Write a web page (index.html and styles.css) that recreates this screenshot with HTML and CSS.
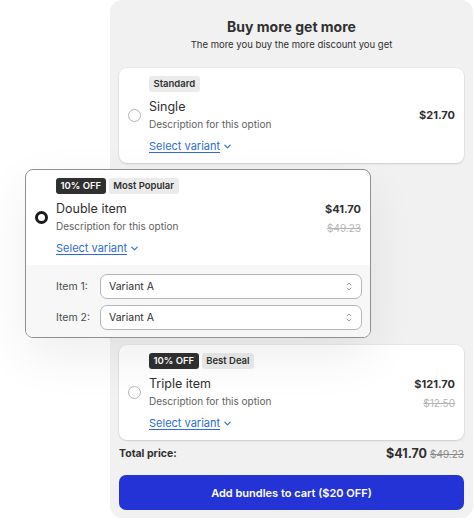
FILE: index.html
```html
<!DOCTYPE html>
<html>
<head>
<meta charset="utf-8">
<link rel="stylesheet" href="styles.css">
</head>
<body>
<div class="panel">
  <div class="header">
    <h1 class="title">Buy more get more</h1>
    <p class="subtitle">The more you buy the more discount you get</p>
  </div>

  <div class="card">
    <div class="card-main">
      <span class="radio"></span>
      <div class="body">
        <div class="badges"><span class="badge light">Standard</span></div>
        <div class="row">
          <div class="info">
            <div class="name">Single</div>
            <div class="desc">Description for this option</div>
          </div>
          <div class="prices"><div class="price">$21.70</div></div>
        </div>
        <div class="link-row"><a class="link" href="#">Select variant</a><svg class="chev" viewBox="0 0 10 10" width="9" height="9"><path d="M2 3.5 L5 6.5 L8 3.5" fill="none" stroke="#2f6bd6" stroke-width="1.3" stroke-linecap="round" stroke-linejoin="round"/></svg></div>
      </div>
    </div>
  </div>

  <div class="card selected">
    <div class="card-main">
      <span class="radio on"></span>
      <div class="body">
        <div class="badges"><span class="badge dark">10% OFF</span><span class="badge light">Most Popular</span></div>
        <div class="row">
          <div class="info">
            <div class="name">Double item</div>
            <div class="desc">Description for this option</div>
          </div>
          <div class="prices"><div class="price">$41.70</div><div class="old">$49.23</div></div>
        </div>
        <div class="link-row"><a class="link" href="#">Select variant</a><svg class="chev" viewBox="0 0 10 10" width="9" height="9"><path d="M2 3.5 L5 6.5 L8 3.5" fill="none" stroke="#2f6bd6" stroke-width="1.3" stroke-linecap="round" stroke-linejoin="round"/></svg></div>
      </div>
    </div>
    <div class="variants">
      <div class="vrow">
        <span class="vlabel">Item 1:</span>
        <div class="select"><span>Variant A</span><svg viewBox="0 0 10 14" width="8" height="11"><path d="M2.5 5 L5 2.5 L7.5 5 M2.5 9 L5 11.5 L7.5 9" fill="none" stroke="#8a8a8a" stroke-width="1.1" stroke-linecap="round" stroke-linejoin="round"/></svg></div>
      </div>
      <div class="vrow">
        <span class="vlabel">Item 2:</span>
        <div class="select"><span>Variant A</span><svg viewBox="0 0 10 14" width="8" height="11"><path d="M2.5 5 L5 2.5 L7.5 5 M2.5 9 L5 11.5 L7.5 9" fill="none" stroke="#8a8a8a" stroke-width="1.1" stroke-linecap="round" stroke-linejoin="round"/></svg></div>
      </div>
    </div>
  </div>

  <div class="card last">
    <div class="card-main">
      <span class="radio"></span>
      <div class="body">
        <div class="badges"><span class="badge dark">10% OFF</span><span class="badge light">Best Deal</span></div>
        <div class="row">
          <div class="info">
            <div class="name">Triple item</div>
            <div class="desc">Description for this option</div>
          </div>
          <div class="prices"><div class="price">$121.70</div><div class="old">$12.50</div></div>
        </div>
        <div class="link-row"><a class="link" href="#">Select variant</a><svg class="chev" viewBox="0 0 10 10" width="9" height="9"><path d="M2 3.5 L5 6.5 L8 3.5" fill="none" stroke="#2f6bd6" stroke-width="1.3" stroke-linecap="round" stroke-linejoin="round"/></svg></div>
      </div>
    </div>
  </div>

  <div class="total">
    <span class="total-label">Total price:</span>
    <span class="total-prices"><span class="total-now">$41.70</span><span class="total-old">$49.23</span></span>
  </div>

  <button class="cta">Add bundles to cart ($20 OFF)</button>
</div>
</body>
</html>
```

FILE: styles.css
```css
*, *::before, *::after { box-sizing: border-box; }
html, body { margin: 0; padding: 0; background: #ffffff; }
body {
  font-family: Inter, "Noto Sans", sans-serif;
  color: #303030;
  width: 474px;
  height: 520px;
  overflow: hidden;
}
.panel {
  margin-left: 110px;
  width: 363px;
  height: 518px;
  background: #f1f1f1;
  border-radius: 12px;
  padding: 0 9px;
  display: flex;
  flex-direction: column;
}
.header {
  text-align: center;
  padding-top: 18px;
  height: 68px;
  flex: none;
}
.title {
  margin: 0;
  font-size: 14px;
  font-weight: 700;
  line-height: 18px;
  color: #303030;
}
.subtitle {
  margin: 0;
  font-size: 9.5px;
  line-height: 17px;
  color: #303030;
}
.card {
  background: #ffffff;
  border-radius: 8px;
  box-shadow: 0 1px 2px rgba(0,0,0,0.12), 0 0 0 1px rgba(0,0,0,0.03);
  margin-bottom: 6px;
  overflow: hidden;
  flex: none;
}
.card.selected {
  margin-left: -94px;
  margin-right: 93px;
  border: 1px solid #8f8f8f;
  box-shadow: 0 18px 50px rgba(0,0,0,0.07);
  margin-bottom: 7px;
  position: relative;
  z-index: 2;
}
.card.last { margin-bottom: 0; }
.card-main {
  display: flex;
  align-items: center;
  padding: 8px 9px 9px 0;
}
.radio {
  width: 30px;
  flex: none;
  display: flex;
  justify-content: center;
}
.radio::before {
  content: "";
  width: 13px;
  height: 13px;
  border-radius: 50%;
  border: 1px solid #b5b5b5;
  display: block;
}
.radio.on::before {
  border: 3.5px solid #1a1a1a;
}
.body { flex: 1; min-width: 0; }
.badges { display: flex; gap: 3px; height: 16px; }
.badge {
  font-size: 9.5px;
  font-weight: 600;
  line-height: 16px;
  padding: 0 4.5px;
  border-radius: 3px;
}
.badge.light { background: #ebebeb; color: #303030; }
.badge.dark { background: #303030; color: #ffffff; }
.row {
  display: flex;
  align-items: center;
  justify-content: space-between;
  margin-top: 6px;
  height: 34px;
}
.name { font-size: 12.5px; line-height: 18px; color: #303030; }
.desc { font-size: 10px; line-height: 16px; color: #616161; }
.prices { text-align: right; align-self: center; }
.price { font-size: 11px; font-weight: 700; line-height: 18px; color: #303030; }
.old {
  font-size: 10px;
  line-height: 20px;
  margin-bottom: -4px;
  color: #b5b5b5;
  text-decoration: line-through;
}
.link-row {
  display: flex;
  align-items: center;
  height: 16px;
  margin-top: 6px;
}
.link {
  font-size: 11px;
  line-height: 16px;
  color: #2f6bd6;
  text-decoration: underline;
  text-underline-offset: 2px;
}
.chev { margin-left: 3px; margin-top: 1px; }
.variants {
  background: #f7f7f7;
  padding: 9px 8px 7px 30px;
  display: flex;
  flex-direction: column;
  gap: 6px;
}
.vrow { display: flex; align-items: center; }
.vlabel { width: 44px; font-size: 10.5px; color: #4a4a4a; }
.select {
  flex: 1;
  height: 25px;
  background: #ffffff;
  border: 1px solid #b5b5b5;
  border-radius: 7px;
  display: flex;
  align-items: center;
  justify-content: space-between;
  padding: 0 8px;
  font-size: 10.5px;
  color: #303030;
}
.total {
  display: flex;
  justify-content: space-between;
  align-items: center;
  height: 26px;
  flex: none;
}
.total-label { font-size: 10.5px; font-weight: 700; color: #303030; }
.total-prices { display: flex; align-items: baseline; }
.total-now { font-size: 12.5px; font-weight: 700; color: #303030; }
.total-old { font-size: 10px; color: #8a8a8a; text-decoration: line-through; margin-left: 3px; }
.cta {
  margin-top: 9px;
  height: 35px;
  width: 100%;
  flex: none;
  background: #2433d6;
  color: #ffffff;
  border: none;
  border-radius: 7px;
  font-family: Inter, "Noto Sans", sans-serif;
  font-size: 11px;
  font-weight: 600;
}
```
